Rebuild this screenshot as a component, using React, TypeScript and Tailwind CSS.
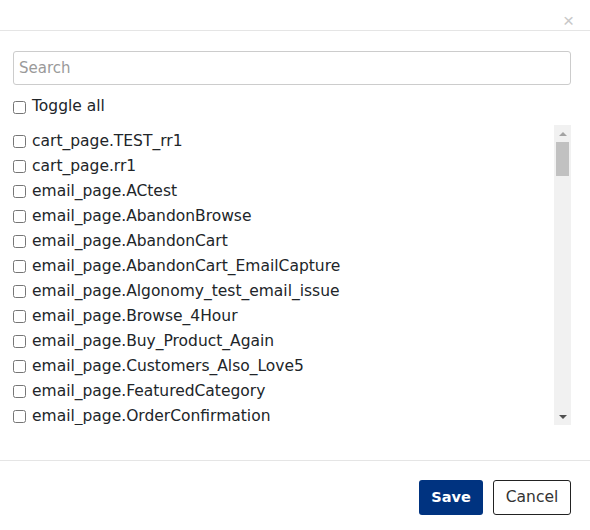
import React, { useState } from 'react';

const base = [
  'cart_page.TEST_rr1',
  'cart_page.rr1',
  'email_page.ACtest',
  'email_page.AbandonBrowse',
  'email_page.AbandonCart',
  'email_page.AbandonCart_EmailCapture',
  'email_page.Algonomy_test_email_issue',
  'email_page.Browse_4Hour',
  'email_page.Buy_Product_Again',
  'email_page.Customers_Also_Love5',
  'email_page.FeaturedCategory',
  'email_page.OrderConfirmation',
  'email_page.OrderShipped',
  'email_page.PriceDrop',
  'email_page.ProductReview',
  'email_page.Recommended',
  'email_page.Replenishment',
  'email_page.Welcome',
];

const pages = ['home_page', 'item_page', 'search_page', 'category_page', 'brand_page', 'add_to_cart_page'];
const items = [
  ...base,
  ...pages.flatMap((p) => Array.from({ length: 13 }, (_, n) => `${p}.rr${n + 1}`)),
];

const LIST_H = 300;
const ARROW = 17;

function Box({ checked, onChange }: { checked: boolean; onChange: () => void }) {
  return (
    <input
      type="checkbox"
      checked={checked}
      onChange={onChange}
      className="m-0 h-[13px] w-[13px] shrink-0"
    />
  );
}

export default function App() {
  const [search, setSearch] = useState('');
  const [selected, setSelected] = useState<Record<string, boolean>>({});
  const [scroll, setScroll] = useState(0);

  const visible = items.filter((i) => i.toLowerCase().includes(search.toLowerCase()));
  const allOn = visible.length > 0 && visible.every((i) => selected[i]);

  const toggleAll = () => {
    const next = { ...selected };
    visible.forEach((i) => (next[i] = !allOn));
    setSelected(next);
  };

  // rough scrollbar geometry for the drawn track
  const contentH = visible.length * 25 + 4;
  const track = LIST_H - ARROW * 2;
  const thumbH = Math.max(34, Math.round((track * LIST_H) / Math.max(contentH, LIST_H)));
  const maxScroll = Math.max(1, contentH - LIST_H);
  const thumbTop = Math.round(((track - thumbH) * scroll) / maxScroll);

  return (
    <div className="w-[590px] h-[530px] bg-white text-[#212529] font-['DejaVu_Sans',sans-serif] flex flex-col">
      <div className="h-[31px] border-b border-[#e5e5e5] relative shrink-0">
        <button className="absolute right-[16px] top-[11px] text-[#c8c8c8] text-[19px] leading-none font-['Liberation_Sans',sans-serif]">
          ×
        </button>
      </div>

      <div className="px-[13px] pt-[20px] flex flex-col">
        <input
          value={search}
          onChange={(e) => setSearch(e.target.value)}
          placeholder="Search"
          className="w-[558px] h-[34px] border border-[#cccccc] rounded-[3px] px-[5px] text-[15px] placeholder:text-[#9a9a9a] outline-none"
        />

        <label className="flex items-center gap-[6px] mt-[12px] h-[20px] text-[15.5px]">
          <Box checked={allOn} onChange={toggleAll} />
          Toggle all
        </label>

        <div className="mt-[8px] w-[558px] h-[300px] flex">
          <div
            className="flex-1 overflow-y-scroll pt-[4px] [scrollbar-width:none]"
            onScroll={(e) => setScroll(e.currentTarget.scrollTop)}
          >
            {visible.map((i) => (
              <label key={i} className="flex items-center gap-[6px] h-[25px] text-[15.5px] whitespace-nowrap">
                <Box checked={!!selected[i]} onChange={() => setSelected({ ...selected, [i]: !selected[i] })} />
                {i}
              </label>
            ))}
          </div>

          <div className="w-[17px] h-full bg-[#f1f1f1] flex flex-col shrink-0">
            <div className="h-[17px] flex items-center justify-center">
              <span className="w-0 h-0 border-x-[4px] border-x-transparent border-b-[4px] border-b-[#a3a3a3]" />
            </div>
            <div className="flex-1 px-[2px]">
              <div className="bg-[#c1c1c1]" style={{ height: thumbH, marginTop: thumbTop }} />
            </div>
            <div className="h-[17px] flex items-center justify-center">
              <span className="w-0 h-0 border-x-[4px] border-x-transparent border-t-[4px] border-t-[#505050]" />
            </div>
          </div>
        </div>
      </div>

      <div className="mt-[35px] border-t border-[#e5e5e5] flex justify-end gap-[10px] px-[19px] pt-[19px]">
        <button className="h-[35px] w-[64px] rounded-[3px] bg-[#003380] text-white text-[14.5px] font-bold">Save</button>
        <button className="h-[35px] w-[78px] rounded-[3px] border border-[#222] bg-white text-[#333] text-[15.5px]">Cancel</button>
      </div>
    </div>
  );
}
